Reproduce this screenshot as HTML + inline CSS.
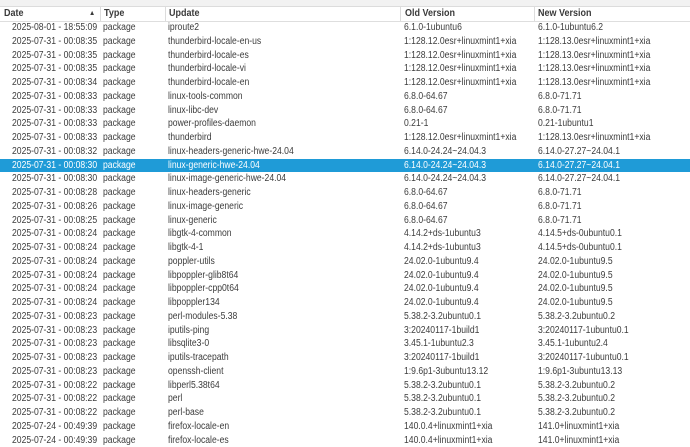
<!DOCTYPE html>
<html><head><style>
body{margin:0;width:690px;height:441px;overflow:hidden;background:#fff;font-family:"Liberation Sans",sans-serif;font-size:10px;color:#3c3c3c}
.top{position:absolute;left:0;top:0;width:690px;height:6px;background:#f2f2f2;border-bottom:1px solid #dcdcdc}
.hdr{position:absolute;top:7px;left:0;width:690px;height:14px;border-bottom:1px solid #dedede;font-weight:bold;color:#3a3a3a}
.hdr span{position:absolute;top:1px;transform:scaleX(0.9);transform-origin:left}
.sep{position:absolute;top:7px;height:14px;width:1px;background:#dcdcdc}
.rows{position:absolute;top:21px;left:0;width:690px}
.r{position:relative;height:13.75px;line-height:13.75px;white-space:nowrap}
.r span{position:absolute;transform:scaleX(0.86);transform-origin:left}
.sel{background:#1f9bd7;color:#fff}
</style></head><body>
<div class="top"></div>
<div class="hdr"><span style="left:4px">Date</span><span style="left:89px;font-size:7px;top:3px">▲</span><span style="left:104px">Type</span><span style="left:169px">Update</span><span style="left:405px">Old Version</span><span style="left:538px">New Version</span></div>
<div class="sep" style="left:100px"></div><div class="sep" style="left:165px"></div><div class="sep" style="left:400px"></div><div class="sep" style="left:534px"></div>
<div class="rows" id="rows"></div>
<script>
const d=[
["2025-08-01 - 18:55:09","iproute2","6.1.0-1ubuntu6","6.1.0-1ubuntu6.2"],
["2025-07-31 - 00:08:35","thunderbird-locale-en-us","1:128.12.0esr+linuxmint1+xia","1:128.13.0esr+linuxmint1+xia"],
["2025-07-31 - 00:08:35","thunderbird-locale-es","1:128.12.0esr+linuxmint1+xia","1:128.13.0esr+linuxmint1+xia"],
["2025-07-31 - 00:08:35","thunderbird-locale-vi","1:128.12.0esr+linuxmint1+xia","1:128.13.0esr+linuxmint1+xia"],
["2025-07-31 - 00:08:34","thunderbird-locale-en","1:128.12.0esr+linuxmint1+xia","1:128.13.0esr+linuxmint1+xia"],
["2025-07-31 - 00:08:33","linux-tools-common","6.8.0-64.67","6.8.0-71.71"],
["2025-07-31 - 00:08:33","linux-libc-dev","6.8.0-64.67","6.8.0-71.71"],
["2025-07-31 - 00:08:33","power-profiles-daemon","0.21-1","0.21-1ubuntu1"],
["2025-07-31 - 00:08:33","thunderbird","1:128.12.0esr+linuxmint1+xia","1:128.13.0esr+linuxmint1+xia"],
["2025-07-31 - 00:08:32","linux-headers-generic-hwe-24.04","6.14.0-24.24~24.04.3","6.14.0-27.27~24.04.1"],
["2025-07-31 - 00:08:30","linux-generic-hwe-24.04","6.14.0-24.24~24.04.3","6.14.0-27.27~24.04.1"],
["2025-07-31 - 00:08:30","linux-image-generic-hwe-24.04","6.14.0-24.24~24.04.3","6.14.0-27.27~24.04.1"],
["2025-07-31 - 00:08:28","linux-headers-generic","6.8.0-64.67","6.8.0-71.71"],
["2025-07-31 - 00:08:26","linux-image-generic","6.8.0-64.67","6.8.0-71.71"],
["2025-07-31 - 00:08:25","linux-generic","6.8.0-64.67","6.8.0-71.71"],
["2025-07-31 - 00:08:24","libgtk-4-common","4.14.2+ds-1ubuntu3","4.14.5+ds-0ubuntu0.1"],
["2025-07-31 - 00:08:24","libgtk-4-1","4.14.2+ds-1ubuntu3","4.14.5+ds-0ubuntu0.1"],
["2025-07-31 - 00:08:24","poppler-utils","24.02.0-1ubuntu9.4","24.02.0-1ubuntu9.5"],
["2025-07-31 - 00:08:24","libpoppler-glib8t64","24.02.0-1ubuntu9.4","24.02.0-1ubuntu9.5"],
["2025-07-31 - 00:08:24","libpoppler-cpp0t64","24.02.0-1ubuntu9.4","24.02.0-1ubuntu9.5"],
["2025-07-31 - 00:08:24","libpoppler134","24.02.0-1ubuntu9.4","24.02.0-1ubuntu9.5"],
["2025-07-31 - 00:08:23","perl-modules-5.38","5.38.2-3.2ubuntu0.1","5.38.2-3.2ubuntu0.2"],
["2025-07-31 - 00:08:23","iputils-ping","3:20240117-1build1","3:20240117-1ubuntu0.1"],
["2025-07-31 - 00:08:23","libsqlite3-0","3.45.1-1ubuntu2.3","3.45.1-1ubuntu2.4"],
["2025-07-31 - 00:08:23","iputils-tracepath","3:20240117-1build1","3:20240117-1ubuntu0.1"],
["2025-07-31 - 00:08:23","openssh-client","1:9.6p1-3ubuntu13.12","1:9.6p1-3ubuntu13.13"],
["2025-07-31 - 00:08:22","libperl5.38t64","5.38.2-3.2ubuntu0.1","5.38.2-3.2ubuntu0.2"],
["2025-07-31 - 00:08:22","perl","5.38.2-3.2ubuntu0.1","5.38.2-3.2ubuntu0.2"],
["2025-07-31 - 00:08:22","perl-base","5.38.2-3.2ubuntu0.1","5.38.2-3.2ubuntu0.2"],
["2025-07-24 - 00:49:39","firefox-locale-en","140.0.4+linuxmint1+xia","141.0+linuxmint1+xia"],
["2025-07-24 - 00:49:39","firefox-locale-es","140.0.4+linuxmint1+xia","141.0+linuxmint1+xia"]];
let h="";d.forEach((r,i)=>{h+=`<div class="r${i==10?' sel':''}"><span style="left:12px">${r[0]}</span><span style="left:103px">package</span><span style="left:168px">${r[1]}</span><span style="left:404px">${r[2]}</span><span style="left:538px">${r[3]}</span></div>`});
document.getElementById("rows").innerHTML=h;
</script>
</body></html>
